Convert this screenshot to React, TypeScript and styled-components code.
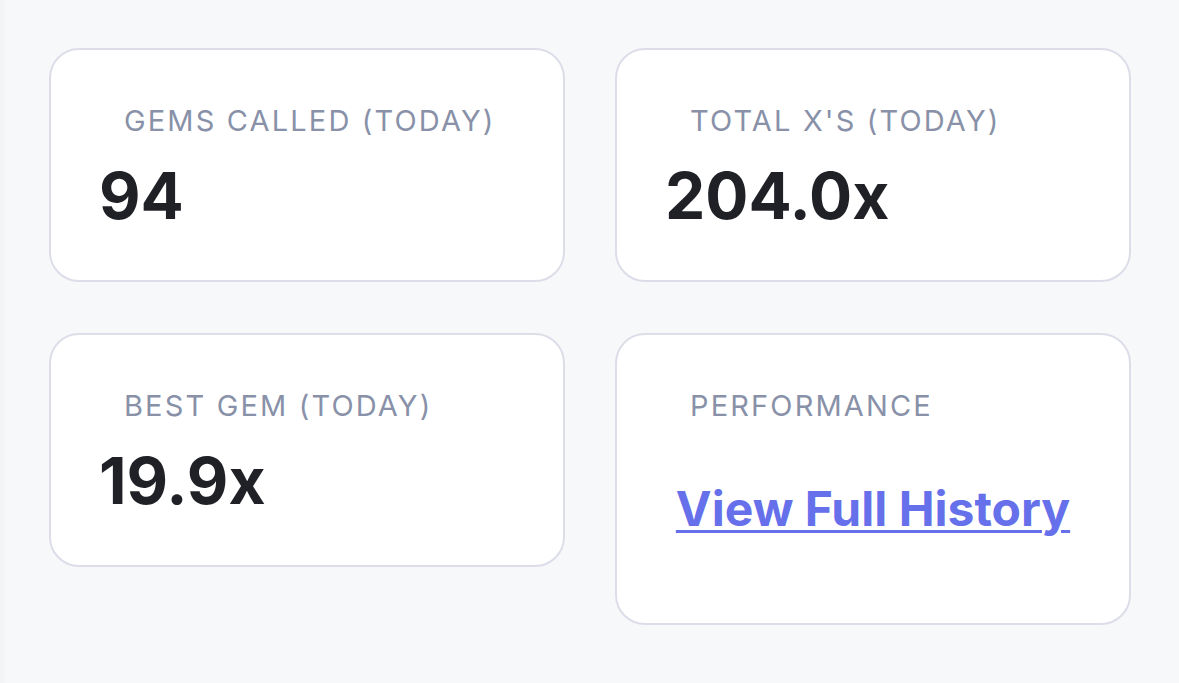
import React from "react";
import styled, { createGlobalStyle } from "styled-components";

const GlobalStyle = createGlobalStyle`
  html, body {
    margin: 0;
    padding: 0;
    background: #f7f8fa;
    font-family: Inter, "Noto Sans", "Liberation Sans", sans-serif;
  }
`;

const Page = styled.div`
  min-height: 683px;
  box-sizing: border-box;
  padding: 48px 49px 0 49px;
  border-left: 5px solid #f3f4f6;
`;

const Grid = styled.div`
  display: grid;
  grid-template-columns: 516px 516px;
  column-gap: 50px;
  row-gap: 51px;
  align-items: start;
  margin-left: -5px;
`;

const Card = styled.div<{ tall?: boolean }>`
  box-sizing: border-box;
  height: ${({ tall }) => (tall ? "292px" : "234px")};
  background: #ffffff;
  border: 2px solid #dddde9;
  border-radius: 30px;
  padding: 51px 48px 0 48px;
`;

const Label = styled.div`
  margin-left: 25px;
  font-size: 29px;
  line-height: 39px;
  letter-spacing: 2.15px;
  color: #8891a8;
  font-weight: 400;
`;

const Value = styled.div`
  margin-top: 15px;
  font-size: 64px;
  line-height: 82px;
  font-weight: 700;
  color: #1f2127;
`;

const LinkRow = styled.div`
  margin-top: 55px;
  text-align: center;
`;

const HistoryLink = styled.a`
  font-size: 48px;
  line-height: 58px;
  font-weight: 700;
  color: #6670ea;
  text-decoration: underline;
  text-decoration-thickness: 3px;
  text-underline-offset: 4px;
`;

const stats = [
  { label: "GEMS CALLED (TODAY)", value: "94" },
  { label: "TOTAL X'S (TODAY)", value: "204.0x" },
  { label: "BEST GEM (TODAY)", value: "19.9x" },
];

export default function App() {
  return (
    <>
      <GlobalStyle />
      <Page>
        <Grid>
          {stats.map((s) => (
            <Card key={s.label}>
              <Label>{s.label}</Label>
              <Value>{s.value}</Value>
            </Card>
          ))}
          <Card tall>
            <Label>PERFORMANCE</Label>
            <LinkRow>
              <HistoryLink href="#">View Full History</HistoryLink>
            </LinkRow>
          </Card>
        </Grid>
      </Page>
    </>
  );
}
